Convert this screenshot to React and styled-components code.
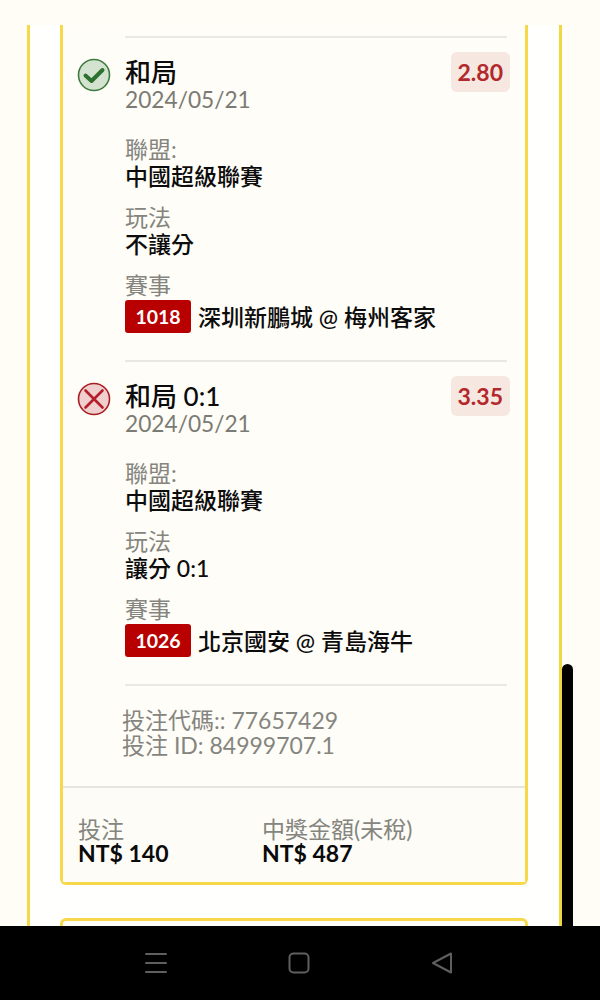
import React from 'react';
import styled, { createGlobalStyle } from 'styled-components';

const GlobalStyle = createGlobalStyle`
	html, body {
		margin: 0;
		padding: 0;
		background: #fffdf5;
	}
	* {
		box-sizing: border-box;
	}
`;

const Page = styled.div`
	position: relative;
	width: 600px;
	height: 1000px;
	overflow: hidden;
	display: flex;
	flex-direction: column;
	background: #fffdf5;
	font-family: Lato, "Noto Sans CJK TC", sans-serif;
`;

const Viewport = styled.div`
	height: 926px;
	padding: 25px 38px 0 27px;
	overflow: hidden;
`;

const Panel = styled.div`
	height: 100%;
	background: #fffffe;
	border-left: 3px solid #f5d949;
	border-right: 3px solid #f0d840;
	padding: 0 31px 0 30px;
	overflow: hidden;
`;

const Card = styled.div`
	background: #fffdf7;
	border: 3px solid #f6d84a;
	border-top: none;
	border-radius: 0 0 6px 6px;
	margin-bottom: 33px;
`;

const Body = styled.div`
	padding: 11px 18px 28px 62px;
`;

const Bet = styled.div`
	position: relative;
	border-top: 2px solid #e9e8e2;
	padding: 19px 0 27px;
`;

const StatusIcon = styled.svg`
	position: absolute;
	left: -48px;
	top: 20px;
	width: 34px;
	height: 34px;
`;

const Odds = styled.span`
	position: absolute;
	right: -3px;
	top: 14px;
	height: 40px;
	padding: 0 7px;
	display: flex;
	align-items: center;
	background: #f6e7e1;
	border-radius: 6px;
	color: #b3282a;
	font-size: 23px;
	font-weight: 700;
`;

const Title = styled.div`
	font-family: "Lato Medium", Lato, "Noto Sans CJK TC", sans-serif;
	font-size: 26px;
	font-weight: 500;
	line-height: 30px;
	color: #0c0c0c;
`;

const DateText = styled.div`
	font-size: 22.7px;
	line-height: 25px;
	color: #7b7b75;
`;

const Label = styled.div`
	font-size: 23px;
	line-height: 26px;
	color: #85857f;
	margin-top: ${props => props.$first ? '24px' : '15px'};
`;

const Value = styled.div`
	font-family: "Lato Medium", Lato, "Noto Sans CJK TC", sans-serif;
	font-size: 23px;
	font-weight: 500;
	line-height: 26px;
	margin-top: ${props => props.$inline ? '0' : '1px'};
	color: #0c0c0c;
`;

const MatchRow = styled.div`
	display: flex;
	align-items: center;
	gap: 7px;
	margin-top: 2px;
`;

const MatchTag = styled.span`
	width: 66px;
	height: 33px;
	display: flex;
	align-items: center;
	justify-content: center;
	background: #b80000;
	border-radius: 3px;
	color: #fff;
	font-size: 19.5px;
	font-weight: 700;
`;

const Codes = styled.div`
	border-top: 2px solid #e9e8e2;
	padding-top: 22px;
	font-size: 23px;
	line-height: 25px;
	color: #85857f;
`;

const CodesLine = styled.div`
	margin-left: -3px;
`;

const Footer = styled.div`
	display: flex;
	border-top: 2px solid #e6e5e0;
	padding: 29px 16px 16px 15px;
	background: #fdfcf6;
`;

const FooterCell = styled.div`
	width: ${props => props.$width}px;
`;

const FooterLabel = styled.div`
	font-size: 23px;
	line-height: 24px;
	color: #85857f;
`;

const FooterValue = styled.div`
	font-size: 23px;
	font-weight: 700;
	line-height: 25px;
	color: #0a0a0a;
`;

const NextCard = styled.div`
	height: 40px;
	border: 3px solid #f6d84a;
	border-radius: 6px 6px 0 0;
	background: #fffdf7;
`;

const ScrollThumb = styled.div`
	position: absolute;
	left: 562px;
	top: 664px;
	width: 11px;
	height: 270px;
	background: #000;
	border-radius: 6px 6px 0 0;
`;

const NavBar = styled.div`
	position: relative;
	z-index: 1;
	height: 74px;
	background: #000;
	display: flex;
	align-items: center;
	padding: 0 0 0 144px;
`;

const NavIcon = styled.svg`
	width: 24px;
	height: 24px;
	margin-right: ${props => props.$gap}px;
	fill: none;
	stroke: #5f5f5f;
	stroke-width: 2;
	stroke-linecap: round;
	stroke-linejoin: round;
`;

const CheckIcon = () => (
	<StatusIcon viewBox="0 0 34 34">
		<circle cx="17" cy="17" r="15.5" fill="#d3e3d0" stroke="#3d7a3d" strokeWidth="1.6" />
		<path d="M8.5 17.5 L14.5 23 L25.5 12" fill="none" stroke="#2e7030" strokeWidth="4" strokeLinecap="round" strokeLinejoin="round" />
	</StatusIcon>
);

const CrossIcon = () => (
	<StatusIcon viewBox="0 0 34 34">
		<circle cx="17" cy="17" r="15.5" fill="#f0cfcf" stroke="#a81c22" strokeWidth="1.6" />
		<path d="M8.5 8.5 L25.5 25.5 M25.5 8.5 L8.5 25.5" fill="none" stroke="#b3202a" strokeWidth="2.6" strokeLinecap="round" />
	</StatusIcon>
);

const BetBlock = ({ won, title, odds, play, tag, match }) => (
	<Bet>
		{won ? <CheckIcon /> : <CrossIcon />}
		<Odds>{odds}</Odds>
		<Title>{title}</Title>
		<DateText>2024/05/21</DateText>
		<Label $first>聯盟:</Label>
		<Value>中國超級聯賽</Value>
		<Label>玩法</Label>
		<Value>{play}</Value>
		<Label>賽事</Label>
		<MatchRow>
			<MatchTag>{tag}</MatchTag>
			<Value $inline>{match}</Value>
		</MatchRow>
	</Bet>
);

const App = () => (
	<>
		<GlobalStyle />
		<Page>
			<Viewport>
				<Panel>
					<Card>
						<Body>
							<BetBlock won title="和局" odds="2.80" play="不讓分" tag="1018" match="深圳新鵬城 @ 梅州客家" />
							<BetBlock title="和局 0:1" odds="3.35" play="讓分 0:1" tag="1026" match="北京國安 @ 青島海牛" />
							<Codes>
								<CodesLine>投注代碼:: 77657429</CodesLine>
								<CodesLine>投注 ID: 84999707.1</CodesLine>
							</Codes>
						</Body>
						<Footer>
							<FooterCell $width={184}>
								<FooterLabel>投注</FooterLabel>
								<FooterValue>NT$ 140</FooterValue>
							</FooterCell>
							<FooterCell $width={200}>
								<FooterLabel>中獎金額(未稅)</FooterLabel>
								<FooterValue>NT$ 487</FooterValue>
							</FooterCell>
						</Footer>
					</Card>
					<NextCard />
				</Panel>
			</Viewport>
			<ScrollThumb />
			<NavBar>
				<NavIcon $gap={119} viewBox="0 0 24 24">
					<path d="M2 3 H22 M2 12 H22 M2 21 H22" />
				</NavIcon>
				<NavIcon $gap={119} viewBox="0 0 24 24">
					<rect x="2.500" y="2.500" width="19" height="19" rx="4" />
				</NavIcon>
				<NavIcon $gap={0} viewBox="0 0 24 24">
					<path d="M21 2.500 V21.500 L3 12 Z" />
				</NavIcon>
			</NavBar>
		</Page>
	</>
);

export default App;
